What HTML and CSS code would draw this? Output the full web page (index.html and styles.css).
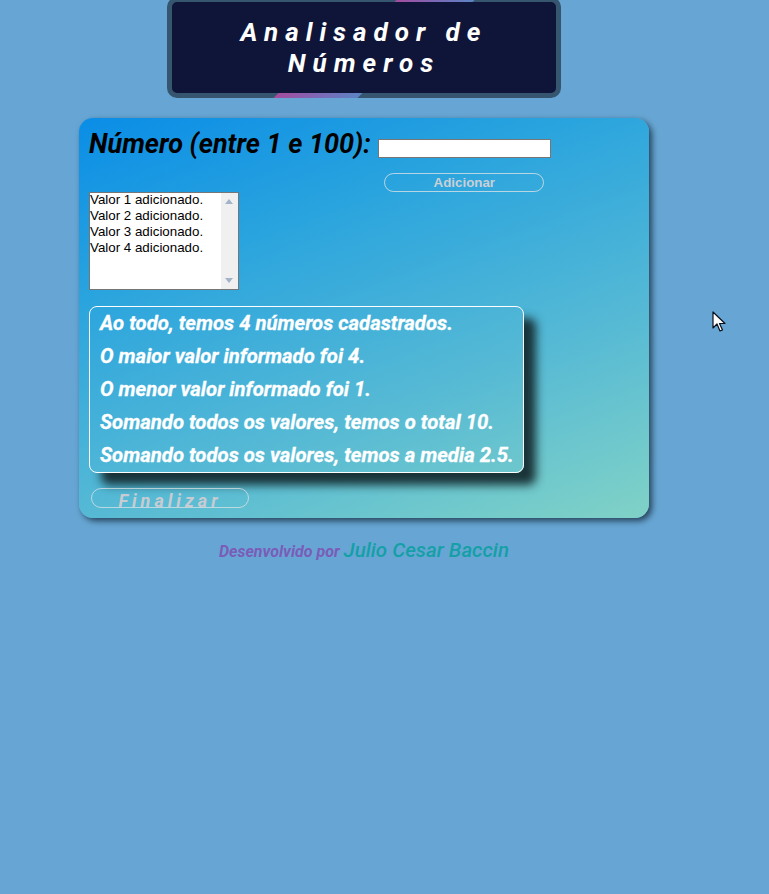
FILE: index.html
```html
<!DOCTYPE html>
<html lang="pt-BR">
<head>
<meta charset="utf-8">
<title>Analisador de Números</title>
<link rel="stylesheet" href="styles.css">
</head>
<body>
<div class="page">
  <header class="header">
    <h1 class="title">Analisador de Números</h1>
  </header>
  <section class="card">
    <div class="top">
      <label class="label" for="num">Número (entre 1 e 100):</label>
      <div class="inputcol">
        <input class="field" id="num" type="number">
        <button class="btn-add" type="button">Adicionar</button>
      </div>
    </div>
    <div class="list">
      <div class="items">
        <div>Valor 1 adicionado.</div>
        <div>Valor 2 adicionado.</div>
        <div>Valor 3 adicionado.</div>
        <div>Valor 4 adicionado.</div>
      </div>
      <div class="scroll">
        <span class="arrow up"></span>
        <span class="arrow down"></span>
      </div>
    </div>
    <div class="results">
      <p>Ao todo, temos 4 números cadastrados.</p>
      <p>O maior valor informado foi 4.</p>
      <p>O menor valor informado foi 1.</p>
      <p>Somando todos os valores, temos o total 10.</p>
      <p>Somando todos os valores, temos a media 2.5.</p>
    </div>
    <button class="btn-end" type="button">Finalizar</button>
  </section>
  <footer class="footer">
    <span class="dev">Desenvolvido por</span> <span class="author">Julio Cesar Baccin</span>
  </footer>
</div>
<svg class="cursor" width="14" height="22" viewBox="0 0 14 22" aria-hidden="true">
  <path d="M1 1 L1 17 L5 13 L8 20 L10.5 19 L7.5 12.5 L13 12.5 Z" fill="#fff" stroke="#0b0f1a" stroke-width="1.2" stroke-linejoin="round"/>
</svg>
</body>
</html>
```
FILE: styles.css
```css
html, body {
  margin: 0;
  padding: 0;
  background: #67a6d4;
}
body {
  position: relative;
  min-height: 894px;
  font-family: Roboto, "Noto Sans", sans-serif;
}
.page {
  margin-left: 79px;
  width: 570px;
}
.header {
  position: relative;
  box-sizing: border-box;
  margin: -3px 0 0 88px;
  width: 394px;
  height: 101px;
  background: #0f1538;
  border: 5px solid #36556e;
  border-radius: 10px;
  display: flex;
  align-items: center;
  justify-content: center;
}
.header::before,
.header::after {
  content: "";
  position: absolute;
  height: 5px;
  background: linear-gradient(90deg, #a54c9e, #7d68b5 50%, #5b84c4);
  transform: skewX(-45deg);
}
.header::before {
  top: -5px;
  left: 225px;
  width: 78px;
}
.header::after {
  bottom: -5px;
  left: 104px;
  width: 84px;
}
.title {
  margin: 0;
  width: 280px;
  text-align: center;
  color: #fff;
  font-size: 26px;
  font-weight: 700;
  font-style: italic;
  letter-spacing: 7px;
  line-height: 31px;
}
.card {
  margin-top: 20px;
  box-sizing: border-box;
  width: 570px;
  height: 400px;
  padding: 11px 10px 10px 10px;
  border-radius: 14px;
  background: linear-gradient(160deg, #0a8de6 0%, #2aa4de 30%, #55b9d5 65%, #80d2c6 100%);
  box-shadow: 3px 3px 6px rgba(10, 25, 40, 0.7);
}
.top {
  display: flex;
  align-items: flex-start;
}
.label {
  font-size: 27px;
  font-weight: 700;
  font-style: italic;
  color: #000;
  line-height: 30px;
}
.inputcol {
  margin-left: 7px;
  margin-top: 10px;
  display: flex;
  flex-direction: column;
  align-items: center;
}
.field {
  box-sizing: border-box;
  width: 173px;
  height: 19px;
  margin: 0;
  padding: 0 2px;
  border: 1px solid #767676;
  background: #fff;
  -moz-appearance: textfield;
}
.field::-webkit-inner-spin-button,
.field::-webkit-outer-spin-button {
  -webkit-appearance: none;
  margin: 0;
}
.btn-add {
  box-sizing: border-box;
  margin-top: 15px;
  width: 160px;
  height: 19px;
  padding: 0;
  border: 1px solid rgba(230, 230, 230, 0.75);
  border-radius: 10px;
  background: transparent;
  color: #c9cfd6;
  font-family: "Liberation Sans", Arial, sans-serif;
  font-weight: 700;
  font-size: 13.33px;
  line-height: 17px;
}
.list {
  box-sizing: border-box;
  width: 150px;
  height: 98px;
  background: #fff;
  border: 1px solid #767676;
  display: flex;
}
.items {
  flex: 1;
  font-family: "Liberation Sans", Arial, sans-serif;
  font-size: 13.33px;
  line-height: 16px;
  color: #000;
  margin-top: -1px;
}
.scroll {
  width: 17px;
  background: #f0f0f0;
  position: relative;
}
.arrow {
  position: absolute;
  left: 4px;
  width: 0;
  height: 0;
  border-left: 4.5px solid transparent;
  border-right: 4.5px solid transparent;
}
.arrow.up {
  top: 6px;
  border-bottom: 5px solid #a3b4c9;
}
.arrow.down {
  bottom: 6px;
  border-top: 5px solid #a3b4c9;
}
.results {
  box-sizing: border-box;
  margin-top: 16px;
  width: 435px;
  height: 167px;
  border: 1px solid #fff;
  border-radius: 8px;
  padding: 0 10px;
  box-shadow: 12px 12px 10px rgba(20, 40, 45, 0.92);
}
.results p {
  margin: 0;
  color: #fff;
  font-size: 20.3px;
  font-weight: 700;
  font-style: italic;
  line-height: 33px;
  white-space: nowrap;
  -webkit-text-stroke: 0.3px #fff;
}
.btn-end {
  box-sizing: border-box;
  display: block;
  margin: 15px 0 0 2px;
  width: 158px;
  height: 20px;
  padding: 3px 0 0 0;
  border: 1px solid rgba(230, 230, 230, 0.7);
  border-radius: 10px;
  background: transparent;
  color: #c9cbd2;
  font-family: Roboto, sans-serif;
  font-size: 18px;
  font-weight: 700;
  font-style: italic;
  letter-spacing: 4px;
  line-height: 18px;
  overflow: hidden;
}
.footer {
  margin-top: 20px;
  text-align: center;
  font-style: italic;
}
.dev {
  color: #7b5cb8;
  font-size: 16px;
  font-weight: 700;
}
.author {
  color: #14a0a6;
  font-size: 20.5px;
  font-weight: 500;
}
.cursor {
  position: absolute;
  left: 712px;
  top: 311px;
}
```
